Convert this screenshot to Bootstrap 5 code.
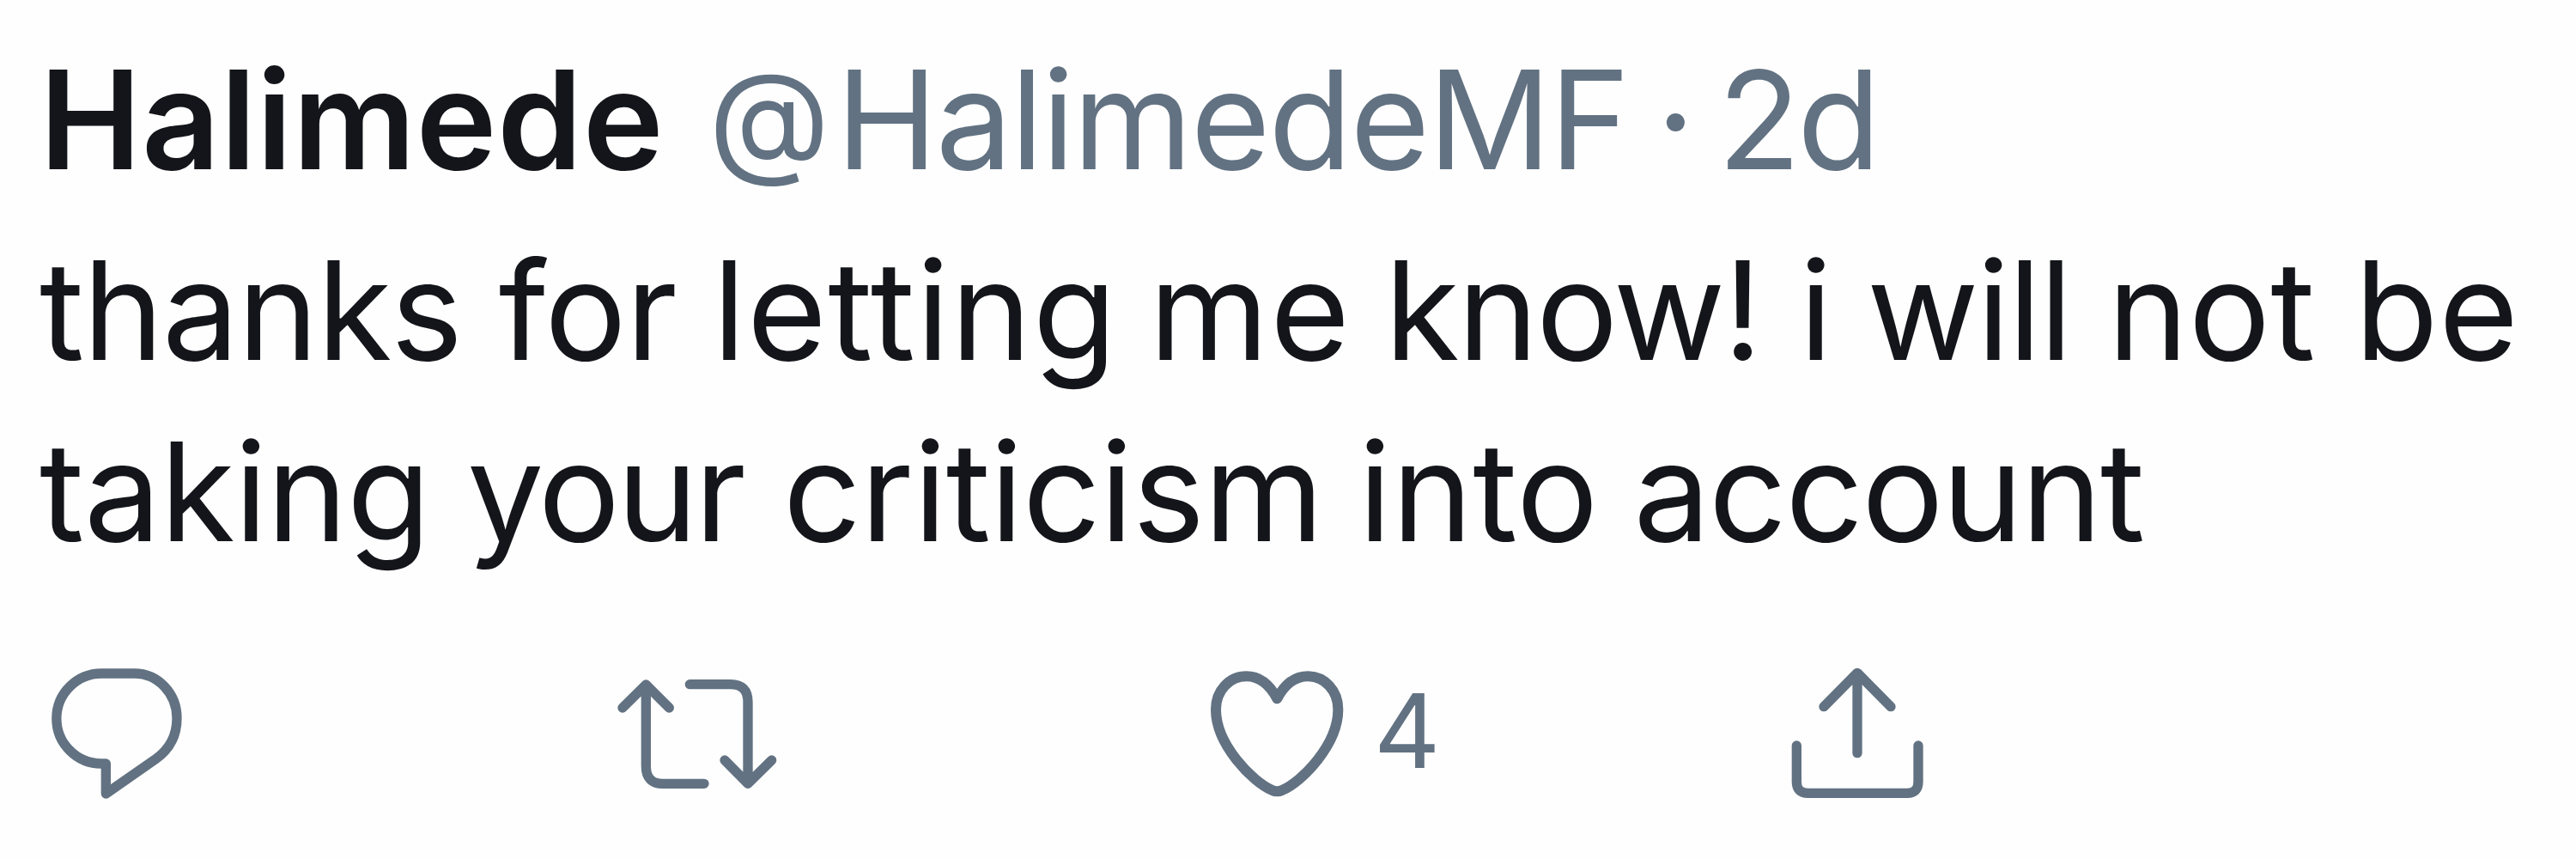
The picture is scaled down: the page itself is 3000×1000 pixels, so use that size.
<!DOCTYPE html>
<html lang="en">
<head>
<meta charset="utf-8">
<meta name="viewport" content="width=device-width, initial-scale=1">
<title>Halimede</title>
<link href="https://cdn.jsdelivr.net/npm/bootstrap@5.3.0/dist/css/bootstrap.min.css" rel="stylesheet">
<style>
  :root { --ink: #14151a; --muted: #627282; }
  body { background: #fefefe; color: var(--ink); font-family: Inter, "Liberation Sans", sans-serif; overflow: hidden; }
  .tweet { width: 3000px; height: 1000px; padding: 34px 0 0 46px; }
  .tweet-head, .tweet-text { font-size: 159px; line-height: 211.6px; white-space: nowrap; }
  .tweet-head { height: 211.6px; margin-bottom: 10px; color: var(--muted); }
  .author { color: var(--ink); font-weight: 600; letter-spacing: .45px; }
  .handle { letter-spacing: -2.15px; margin-left: 7.5px; }
  .at-sign { font-size: 146px; line-height: 0; vertical-align: 8px; margin-right: 9.5px; }
  .sep { margin-left: -12.4px; }
  .age { letter-spacing: -4.07px; margin-left: -18.9px; }
  .k-thanks { letter-spacing: -1.5px; }
  .k-for { letter-spacing: -.56px; margin-left: -1.5px; }
  .k-letting { letter-spacing: 1.47px; margin-left: -3px; }
  .k-me { letter-spacing: 1.72px; margin-left: -8.3px; }
  .k-know { letter-spacing: -2.42px; margin-left: -5.7px; }
  .k-i { margin-left: .8px; }
  .k-will { letter-spacing: -2.04px; margin-left: -4.5px; }
  .k-not { letter-spacing: .36px; margin-left: -2.1px; }
  .k-be { letter-spacing: .64px; margin-left: .9px; }
  .k-taking { letter-spacing: -.76px; }
  .k-your { letter-spacing: -3.54px; margin-left: -1.4px; }
  .k-criticism { letter-spacing: -.68px; margin-left: 2px; }
  .k-into { letter-spacing: .36px; margin-left: -3.4px; }
  .k-account { letter-spacing: -1.79px; margin-left: -3.9px; }
  .actions { margin: 71px 0 0 -6px; height: 200px; color: var(--muted); }
  .actions svg { display: block; flex: none; height: 200px; fill: none; stroke: currentColor; stroke-width: 34; stroke-linecap: round; stroke-linejoin: round; }
  .act { flex: none; }
  .act-reply { width: 660px; }
  .act-repost { width: 690px; }
  .act-like { width: 670px; }
  .count { font-size: 120px; line-height: 201px; }
</style>
</head>
<body>
<article class="tweet">
  <header class="tweet-head"><span class="author">Halimede</span> <span class="handle"><span class="at-sign">@</span>HalimedeMF</span> <span class="sep">·</span> <span class="age">2d</span></header>
  <p class="tweet-text mb-0"><span class="k-thanks">thanks</span> <span class="k-for">for</span> <span class="k-letting">letting</span> <span class="k-me">me</span> <span class="k-know">know!</span> <span class="k-i">i</span> <span class="k-will">will</span> <span class="k-not">not</span> <span class="k-be">be</span><br>
  <span class="k-taking">taking</span> <span class="k-your">your</span> <span class="k-criticism">criticism</span> <span class="k-into">into</span> <span class="k-account">account</span></p>
  <div class="actions d-flex">
    <div class="act act-reply">
      <svg width="200" viewBox="0 0 600 600"><path d="M350 102H235A157.5 157.5 0 0 0 235 417H250V522L425 400C470 368 498 320 498 258A148 156 0 0 0 350 102Z"/></svg>
    </div>
    <div class="act act-repost">
      <svg width="220" viewBox="0 0 660 600"><path d="M75 222L157 141L238 222M157 141V425Q157 487 215 487H360M310 140H452Q513 140 513 202V486M432 405L513 487L596 405"/></svg>
    </div>
    <div class="act act-like d-flex">
      <svg width="210" viewBox="0 0 630 600"><path stroke-width="36" d="M292 190C265 140 228 112 185 112C125 112 78 162 78 228C78 350 205 480 275 510Q292 518 309 510C380 480 505 350 505 228C505 162 458 112 400 112C355 112 318 140 292 190Z"/></svg>
      <span class="count">4</span>
    </div>
    <div class="act">
      <svg width="200" viewBox="0 0 600 600"><path d="M192 218L309 100L426 218M309 100V380M97 354V480Q97 520 137 520H483Q522 520 522 480V354"/></svg>
    </div>
  </div>
</article>
<script src="https://cdn.jsdelivr.net/npm/bootstrap@5.3.0/dist/js/bootstrap.bundle.min.js"></script>
</body>
</html>
